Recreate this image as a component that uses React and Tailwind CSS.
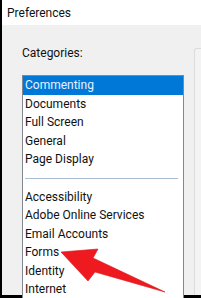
import React from "react";

const top = ["Commenting", "Documents", "Full Screen", "General", "Page Display"];
const rest = [
  "Accessibility",
  "Adobe Online Services",
  "Email Accounts",
  "Forms",
  "Identity",
  "Internet",
];

const Row = ({ label, selected }) => (
  <div
    className={`h-[18.5px] flex items-center pl-[2px] whitespace-nowrap ${
      selected ? "bg-[#0078d7] text-[#e6f2ff]" : "text-[#111]"
    }`}
  >
    {label}
  </div>
);

export default function App() {
  return (
    <div className="relative w-[201px] h-[298px] overflow-hidden font-['Roboto',sans-serif] text-[12px]">
      <div className="w-full h-full border-l-2 border-b-[3px] border-black bg-[#f0f0f0] flex flex-col">
        <div className="h-[25px] shrink-0 bg-white pl-[5px] flex items-center text-[#111]">
          Preferences
        </div>
        <div className="flex flex-1 min-h-0">
          <div className="w-[182px] shrink-0 pl-[20px] flex flex-col">
            <div className="mt-[19px] h-[18px] flex items-center text-[#111]">Categories:</div>
            <div className="mt-[13px] w-[162px] border border-[#828790] bg-white flex-1">
              {top.map((t, i) => (
                <Row key={t} label={t} selected={i === 0} />
              ))}
              <div className="h-[19px] flex items-center px-[2px]">
                <div className="h-px w-[153px] bg-[#a9bdd3]" />
              </div>
              {rest.map((t) => (
                <Row key={t} label={t} />
              ))}
            </div>
          </div>
          <div className="flex-1 mt-[23px] ml-[10px] border-l border-t border-[#dcdcdc] rounded-tl-[3px] bg-[#f3f3f3]" />
        </div>
      </div>
      <svg className="absolute left-0 top-0" width="201" height="298" viewBox="0 0 201 298">
        <polygon
          points="61,252 98,249 93,258 165,292 95,272 88,281"
          fill="#ee1a1f"
          stroke="#d9141a"
          strokeWidth="0.6"
          strokeLinejoin="round"
        />
      </svg>
    </div>
  );
}
